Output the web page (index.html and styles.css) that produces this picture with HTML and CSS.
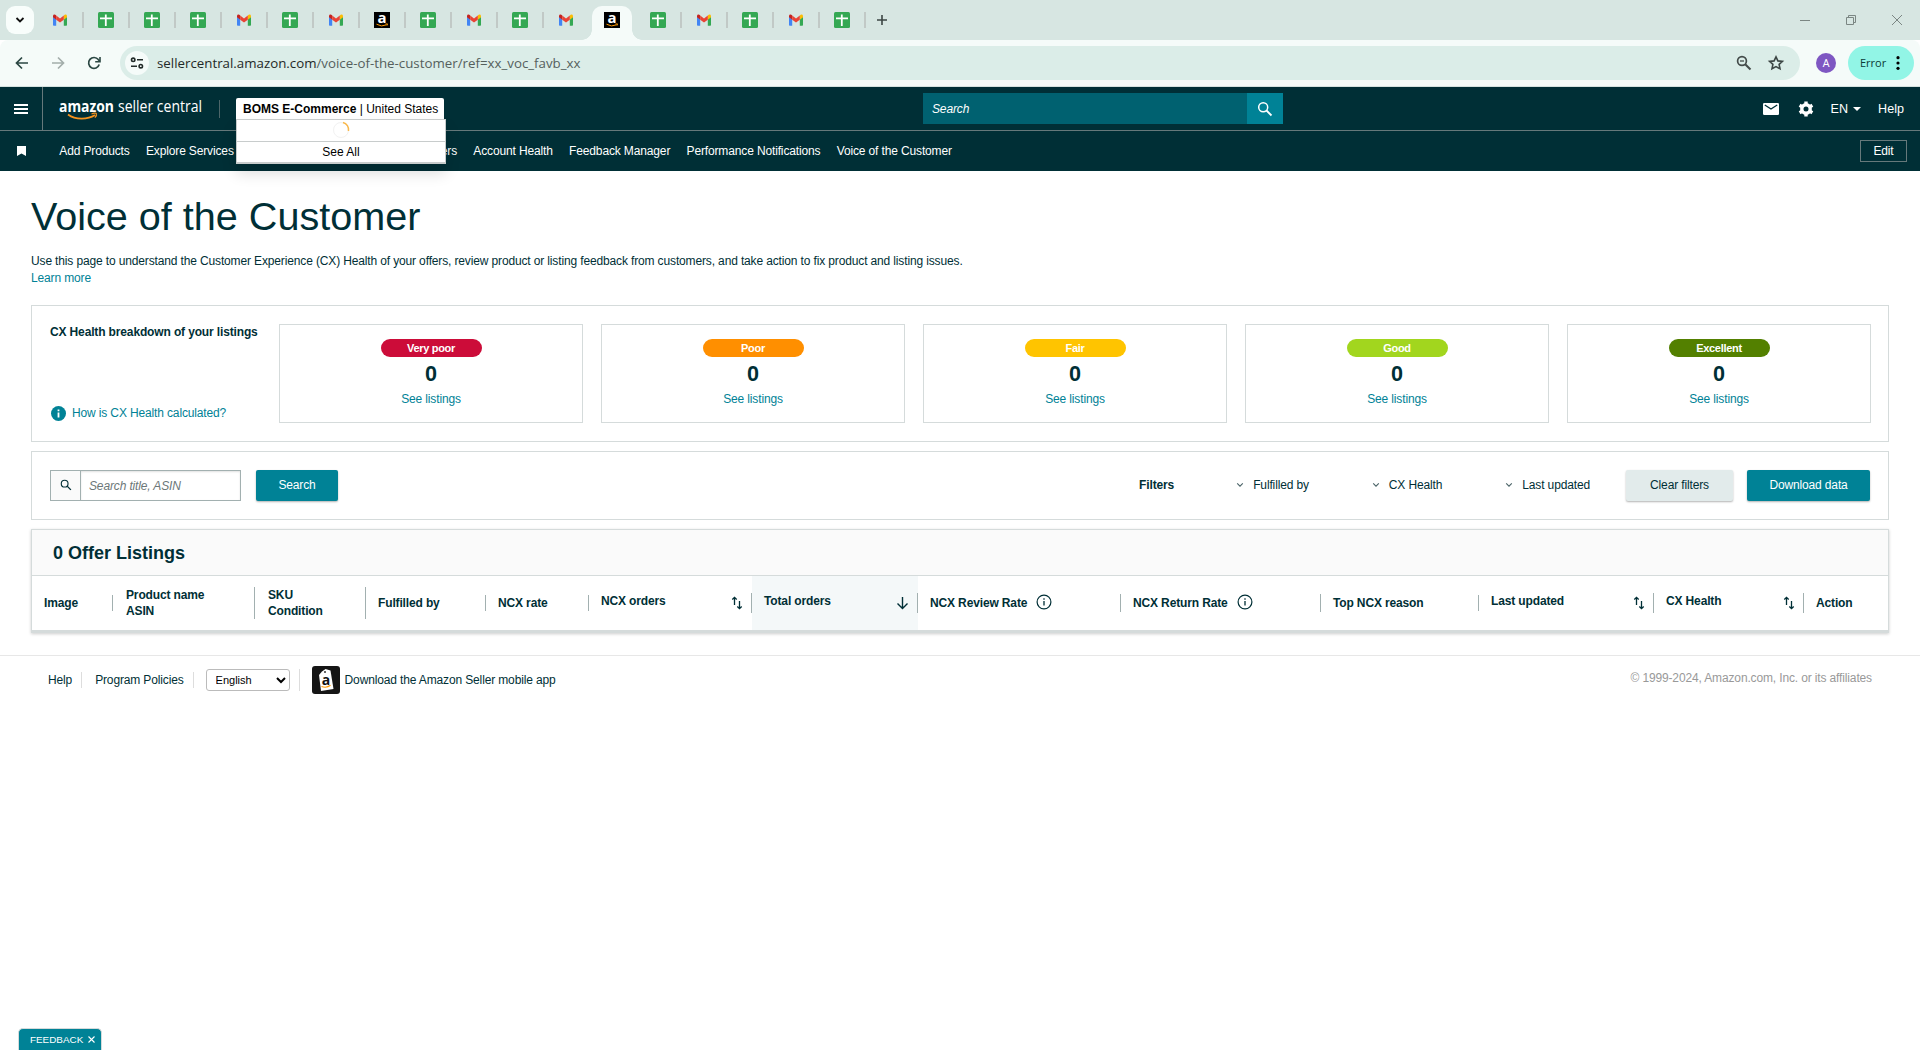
FILE: index.html
```html
<!DOCTYPE html>
<html lang="en">
<head>
  <meta charset="UTF-8">
  <meta name="viewport" content="width=device-width, initial-scale=1.0">
  <title>Voice of the Customer</title>
  <link rel="stylesheet" href="styles.css">
</head>
<body>
  <svg class="defs" width="0" height="0">
    <symbol id="gmail" viewBox="0 0 16 16">
      <path d="M1 4.500V13a.8.8 0 0 0 .8.8h2.400V7.500z" fill="#4285f4"/>
      <path d="M15 4.500V13a.8.8 0 0 1-.8.8h-2.400V7.500z" fill="#34a853"/>
      <path d="M11.800 3.500V7.700L15 5.300V4.200c0-1.600-1.700-2.300-3.200-.7z" fill="#fbbc04"/>
      <path d="M1 5.300 4.200 7.700V3.500C2.700 1.900 1 2.600 1 4.200z" fill="#c5221f"/>
      <path d="M4.200 3.500 8 6.500l3.800-3v4.200L8 10.600 4.200 7.700z" fill="#ea4335"/>
    </symbol>
    <symbol id="sheet" viewBox="0 0 16 16">
      <rect width="16" height="16" rx="1.500" fill="#34a853"/>
      <path d="M2 6.300h12M7.800 2.500v11.500" stroke="#fff" stroke-width="1.800"/>
    </symbol>
    <symbol id="sort" viewBox="0 0 12 14">
      <path d="M3.500 9V1.500M1.300 3.500l2.200-2.200L5.700 3.500M8.500 5v7.500M6.300 10.500l2.200 2.200 2.200-2.200" fill="none" stroke="#002f36" stroke-width="1.300"/>
    </symbol>
    <symbol id="info" viewBox="0 0 16 16">
      <circle cx="8" cy="8" r="6.900" fill="none" stroke="#002f36" stroke-width="1.200"/>
      <path d="M8 7v4.500M8 4.300v1.500" stroke="#002f36" stroke-width="1.300"/>
    </symbol>
    <symbol id="chevron" viewBox="0 0 8 6">
      <path d="m1.200 1.300 2.800 2.800 2.800-2.800" fill="none" stroke="#4a6367" stroke-width="1.100"/>
    </symbol>
    <symbol id="magnifier" viewBox="0 0 16 16">
      <circle cx="6.200" cy="6.200" r="4.500" fill="none" stroke="currentColor" stroke-width="1.500"/>
      <path d="m9.500 9.500 5 5" stroke="currentColor" stroke-width="1.800"/>
    </symbol>
  </svg>

  <!-- Browser -->
  <div class="tabstrip">
    <button class="tab-search"><svg width="10" height="8" viewBox="0 0 10 8"><path d="m1.500 2 3.500 3.500L8.500 2" fill="none" stroke="#111" stroke-width="1.800"/></svg></button>
    <div class="tabs">
      <div class="tab"><svg><use href="#gmail"/></svg></div>
      <div class="tab"><svg><use href="#sheet"/></svg></div>
      <div class="tab"><svg><use href="#sheet"/></svg></div>
      <div class="tab"><svg><use href="#sheet"/></svg></div>
      <div class="tab"><svg><use href="#gmail"/></svg></div>
      <div class="tab"><svg><use href="#sheet"/></svg></div>
      <div class="tab"><svg><use href="#gmail"/></svg></div>
      <div class="tab">
        <svg viewBox="0 0 16 16">
          <rect width="16" height="16"/>
          <text x="8" y="10.700" text-anchor="middle" class="amz-a">a</text>
          <path d="M2.500 12.200q5 3.200 10 .6M11.500 12l2-.1-.5 1.700" stroke="#f90" fill="none"/>
        </svg>
      </div>
      <div class="tab"><svg><use href="#sheet"/></svg></div>
      <div class="tab"><svg><use href="#gmail"/></svg></div>
      <div class="tab"><svg><use href="#sheet"/></svg></div>
      <div class="tab no-line"><svg><use href="#gmail"/></svg></div>
      <div class="tab-active">
        <svg viewBox="0 0 16 16">
          <rect width="16" height="16"/>
          <text x="8" y="10.700" text-anchor="middle" class="amz-a">a</text>
          <path d="M2.500 12.200q5 3.200 10 .6M11.500 12l2-.1-.5 1.700" stroke="#f90" fill="none"/>
        </svg>
      </div>
      <div class="tab"><svg><use href="#sheet"/></svg></div>
      <div class="tab"><svg><use href="#gmail"/></svg></div>
      <div class="tab"><svg><use href="#sheet"/></svg></div>
      <div class="tab"><svg><use href="#gmail"/></svg></div>
      <div class="tab"><svg><use href="#sheet"/></svg></div>
    </div>
    <svg class="new-tab" width="12" height="12" viewBox="0 0 12 12"><path d="M6 1v10M1 6h10" stroke="#3c4644" stroke-width="1.600"/></svg>
    <div class="window-buttons">
      <svg width="12" height="12" viewBox="0 0 12 12"><path d="M1 6.500h10"/></svg>
      <svg width="12" height="12" viewBox="0 0 12 12"><path d="M1.500 3.500h7v7h-7zM3.500 3.500v-2h7v7h-2"/></svg>
      <svg width="12" height="12" viewBox="0 0 12 12"><path d="m1 1 10 10M11 1 1 11"/></svg>
    </div>
  </div>
  <div class="toolbar">
    <div class="nav-buttons">
      <svg width="14" height="14" viewBox="0 0 14 14"><path d="M13 7H2M7 1.500 1.500 7 7 12.500" fill="none" stroke="#2b4743" stroke-width="1.700"/></svg>
      <svg width="14" height="14" viewBox="0 0 14 14"><path d="M1 7h11M7 1.500 12.500 7 7 12.500" fill="none" stroke="#a3aeab" stroke-width="1.700"/></svg>
      <svg width="14" height="14" viewBox="0 0 14 14"><path d="M12.200 8.500A5.400 5.400 0 1 1 11.300 3.600L12.600 5" fill="none" stroke="#2b4743" stroke-width="1.700"/><path d="M13 1v4.800H8.200" fill="none" stroke="#2b4743" stroke-width="1.600"/></svg>
    </div>
    <div class="url-bar">
      <span class="site-info">
        <svg width="14" height="12" viewBox="0 0 14 12"><circle cx="3.200" cy="2.800" r="1.700"/><path d="M7 2.800h6M1 9.200h6"/><circle cx="10.800" cy="9.200" r="1.700"/></svg>
      </span>
      <span class="url">sellercentral.amazon.com<span>/voice-of-the-customer/ref=xx_voc_favb_xx</span></span>
      <svg class="zoom-icon" width="16" height="16" viewBox="0 0 16 16"><circle cx="6" cy="6" r="4.400" fill="none" stroke="#444c4a" stroke-width="1.700"/><path d="m9.200 9.200 5.300 5.300" stroke="#444c4a" stroke-width="2"/><path d="M4 6h4" stroke="#444c4a" stroke-width="1.300"/></svg>
      <svg width="16" height="16" viewBox="0 0 16 16"><path d="m8 1.800 1.900 4.100 4.500.5-3.300 3 .9 4.400L8 11.600l-4 2.200.9-4.400-3.300-3 4.500-.5z" fill="none" stroke="#3c4644" stroke-width="1.600"/></svg>
    </div>
    <span class="avatar">A</span>
    <button class="error-pill">Error
      <svg width="4" height="14" viewBox="0 0 4 14"><circle cx="2" cy="1.700" r="1.600"/><circle cx="2" cy="7" r="1.600"/><circle cx="2" cy="12.300" r="1.600"/></svg>
    </button>
  </div>

  <!-- Seller Central header -->
  <header class="header">
    <div class="hamburger"><span></span><span></span><span></span></div>
    <svg class="logo" width="146" height="26" viewBox="0 0 146 26">
      <text x="0" y="16" textLength="55" lengthAdjust="spacingAndGlyphs" class="logo-bold">amazon</text>
      <text x="59" y="16" textLength="84" lengthAdjust="spacingAndGlyphs" class="logo-light">seller central</text>
      <path d="M9 18.500c8 6 20 5 27 .5" fill="none" stroke="#f7931e" stroke-width="1.700"/>
      <path d="M32.500 18c2-1 4.500-1.200 4.800-.5.400.9-.3 3-1.400 4.200" fill="none" stroke="#f7931e" stroke-width="1.200"/>
    </svg>
    <div class="account">
      <div class="account-current"><b>BOMS E-Commerce</b> | United States</div>
      <div class="account-menu">
        <div class="account-loading"><svg width="18" height="18" viewBox="0 0 18 18"><circle cx="9" cy="9" r="7.500" fill="none" stroke="#f2f2f2"/><path d="M11 1.500A7.500 7.500 0 0 1 16.500 10" fill="none" stroke="#f9b84b" stroke-width="1.500"/></svg></div>
        <div class="account-all">See All</div>
      </div>
    </div>
    <div class="header-search">
      <span>Search</span>
      <button><svg width="16" height="16"><use href="#magnifier"/></svg></button>
    </div>
    <div class="header-links">
      <svg width="16" height="12" viewBox="0 0 16 12"><rect width="16" height="12" rx="1.200" fill="#fff"/><path d="m1.800 2 6.200 4 6.200-4" fill="none" stroke="#002f36" stroke-width="1.300"/></svg>
      <svg class="gear" width="16" height="16" viewBox="0 0 16 16"><circle cx="8" cy="8" r="4.200" fill="none" stroke="#fff" stroke-width="3.400"/><path d="M8 .6v2.900M8 12.500v2.900M1.600 4.300l2.500 1.450M11.900 10.250l2.500 1.450M1.600 11.700l2.500-1.450M11.900 5.750l2.500-1.450" stroke="#fff" stroke-width="3.400"/></svg>
      <span class="lang">EN</span>
      <svg class="caret" width="8" height="4" viewBox="0 0 8 4"><path d="M0 0h8L4 4z" fill="#fff"/></svg>
      <span class="help">Help</span>
    </div>
  </header>
  <nav class="favorites">
    <svg class="bookmark" width="9" height="10" viewBox="0 0 9 10"><path d="M0 0h9v10L4.500 7.500 0 10z" fill="#fff"/></svg>
    <a>Add Products</a>
    <a>Explore Services</a>
    <a class="orders">Manage Orders</a>
    <a>Account Health</a>
    <a>Feedback Manager</a>
    <a>Performance Notifications</a>
    <a>Voice of the Customer</a>
    <button class="edit">Edit</button>
  </nav>

  <main>
    <h1>Voice of the Customer</h1>
    <p class="intro">Use this page to understand the Customer Experience (CX) Health of your offers, review product or listing feedback from customers, and take action to fix product and listing issues.<br><a>Learn more</a></p>

    <section class="health">
      <div class="health-title">
        <b>CX Health breakdown of your listings</b>
        <a><svg width="15" height="15" viewBox="0 0 15 15"><circle cx="7.500" cy="7.500" r="7.500" fill="#008296"/><path d="M7.500 6.500v5M7.500 3.500v1.800" stroke="#fff" stroke-width="1.800"/></svg>How is CX Health calculated?</a>
      </div>
      <div class="health-card"><span class="pill very-poor">Very poor</span><strong>0</strong><a>See listings</a></div>
      <div class="health-card"><span class="pill poor">Poor</span><strong>0</strong><a>See listings</a></div>
      <div class="health-card"><span class="pill fair">Fair</span><strong>0</strong><a>See listings</a></div>
      <div class="health-card"><span class="pill good">Good</span><strong>0</strong><a>See listings</a></div>
      <div class="health-card"><span class="pill excellent">Excellent</span><strong>0</strong><a>See listings</a></div>
    </section>

    <section class="filters">
      <div class="search-box">
        <span class="search-icon"><svg width="12" height="12"><use href="#magnifier"/></svg></span>
        <input type="text" placeholder="Search title, ASIN">
      </div>
      <button class="btn btn-search">Search</button>
      <b class="filters-label">Filters</b>
      <div class="filter fulfilled"><svg width="8" height="6"><use href="#chevron"/></svg>Fulfilled by</div>
      <div class="filter cx"><svg width="8" height="6"><use href="#chevron"/></svg>CX Health</div>
      <div class="filter updated"><svg width="8" height="6"><use href="#chevron"/></svg>Last updated</div>
      <button class="btn btn-clear">Clear filters</button>
      <button class="btn btn-download">Download data</button>
    </section>

    <section class="listings">
      <h2>0 Offer Listings</h2>
      <div class="columns">
        <div class="col"><div>Image</div></div>
        <div class="col two-line"><div>Product name<br>ASIN</div></div>
        <div class="col two-line"><div>SKU<br>Condition</div></div>
        <div class="col"><div>Fulfilled by</div></div>
        <div class="col"><div>NCX rate</div></div>
        <div class="col sortable"><div><span>NCX orders</span><svg width="12" height="14"><use href="#sort"/></svg></div></div>
        <div class="col sortable sorted"><div><span>Total orders</span><svg width="13" height="14" viewBox="0 0 13 14"><path d="M6.500 1v11.500M1.500 7.500l5 5 5-5" fill="none" stroke="#002f36" stroke-width="1.400"/></svg></div></div>
        <div class="col with-info"><div>NCX Review Rate<svg width="16" height="16"><use href="#info"/></svg></div></div>
        <div class="col with-info"><div>NCX Return Rate<svg width="16" height="16"><use href="#info"/></svg></div></div>
        <div class="col"><div>Top NCX reason</div></div>
        <div class="col sortable"><div><span>Last updated</span><svg width="12" height="14"><use href="#sort"/></svg></div></div>
        <div class="col sortable"><div><span>CX Health</span><svg width="12" height="14"><use href="#sort"/></svg></div></div>
        <div class="col last"><div>Action</div></div>
      </div>
    </section>
  </main>

  <footer>
    <a class="foot-help">Help</a>
    <a class="foot-policies">Program Policies</a>
    <div class="foot-lang"><select><option>English</option></select></div>
    <svg class="app-icon" width="28" height="28" viewBox="0 0 28 28">
      <rect width="28" height="28" rx="3" fill="#151515"/>
      <path d="M10 5.500 13.500 3l5 1.500 3 18.500-12.500 2L7 9z" fill="#fff"/>
      <circle cx="13" cy="6" r="1" fill="#333"/>
      <text x="14" y="18.500" text-anchor="middle" class="app-a">a</text>
      <path d="M9.500 20.500q5 2 9-1.200" stroke="#f90" stroke-width="1.200" fill="none"/>
    </svg>
    <a>Download the Amazon Seller mobile app</a>
    <span class="copyright">© 1999-2024, Amazon.com, Inc. or its affiliates</span>
  </footer>

  <div class="feedback">FEEDBACK <svg width="7" height="7" viewBox="0 0 7 7"><path d="m.5.5 6 6M6.500.5l-6 6" stroke="#fff" stroke-width="1.100"/></svg></div>
</body>
</html>
```
FILE: styles.css
```css
* {
  box-sizing: border-box;
}

body {
  margin: 0;
  height: 1050px;
  overflow: hidden;
  font-family: "Liberation Sans", Arial, sans-serif;
  font-size: 12px;
  letter-spacing: -0.14px;
  line-height: 16px;
  color: #002f36;
  background: #fff;
}

button {
  font-family: inherit;
  font-size: inherit;
  letter-spacing: inherit;
  border: none;
  padding: 0;
}

svg {
  display: block;
  flex: none;
  overflow: visible;
}

.defs {
  position: absolute;
}

/* Browser tabs */
.tabstrip {
  display: flex;
  align-items: center;
  height: 40px;
  padding-left: 6px;
  background: #d7e6e2;
}

.tab-search {
  display: flex;
  align-items: center;
  justify-content: center;
  width: 28px;
  height: 28px;
  border-radius: 9px;
  background: #f8fdfb;
}

.tabs {
  display: flex;
  height: 40px;
  margin-left: 4px;
}

.tab {
  display: flex;
  align-items: center;
  gap: 14px;
  width: 46px;
  padding-left: 14px;
}

.tab::after {
  content: "";
  width: 2px;
  height: 16px;
  background: #c1c9c6;
}

.tab.no-line::after {
  background: none;
}

.tab svg,
.tab-active svg {
  width: 16px;
  height: 16px;
}

.tab-active {
  position: relative;
  display: flex;
  align-items: center;
  justify-content: center;
  width: 40px;
  height: 34px;
  margin: 6px 4px 0 2px;
  padding-bottom: 6px;
  border-radius: 10px 10px 0 0;
  background: #f5fbf9;
}

.tab-active::before,
.tab-active::after {
  content: "";
  position: absolute;
  bottom: 0;
  width: 10px;
  height: 10px;
}

.tab-active::before {
  left: -10px;
  background: radial-gradient(circle at 0 0, transparent 9.5px, #f5fbf9 10px);
}

.tab-active::after {
  right: -10px;
  background: radial-gradient(circle at 100% 0, transparent 9.5px, #f5fbf9 10px);
}

.amz-a {
  font: bold 15px "Open Sans", sans-serif;
  fill: #fff;
}

.new-tab {
  margin-left: 10px;
}

.window-buttons {
  display: flex;
  gap: 34px;
  margin-left: auto;
  padding-right: 17px;
}

.window-buttons path {
  fill: none;
  stroke: #7b8683;
}

/* Browser toolbar */
.toolbar {
  display: flex;
  align-items: center;
  height: 47px;
  padding: 0 6px 1px 15px;
  background: #f5fbf9;
  border-bottom: 1px solid #d5e2df;
  border-radius: 8px 8px 0 0;
  letter-spacing: 0;
}

.nav-buttons {
  display: flex;
  gap: 22px;
}

.url-bar {
  display: flex;
  align-items: center;
  width: 1680px;
  height: 34px;
  margin-left: 19px;
  padding: 0 16px 0 5px;
  border-radius: 17px;
  background: #dbede8;
}

.site-info {
  display: flex;
  align-items: center;
  justify-content: center;
  width: 24px;
  height: 24px;
  border-radius: 12px;
  background: #f5fbf9;
}

.site-info svg {
  fill: none;
  stroke: #222b29;
  stroke-width: 1.6;
}

.url {
  margin-left: 8px;
  font-family: "Open Sans", "Noto Sans", sans-serif;
  font-size: 13.3px;
  color: #1f2927;
}

.url span {
  color: #55605d;
}

.zoom-icon {
  margin-left: auto;
  margin-right: 16px;
}

.avatar {
  width: 20px;
  height: 20px;
  margin-left: 16px;
  border-radius: 10px;
  background: #7e57c2;
  color: #fff;
  font-family: Roboto, sans-serif;
  font-size: 11px;
  line-height: 21px;
  text-align: center;
}

.error-pill {
  display: flex;
  align-items: center;
  justify-content: space-between;
  width: 66px;
  height: 34px;
  margin-left: 12px;
  padding: 0 14px 0 12px;
  border-radius: 17px;
  background: #92f5e6;
  color: #0b3b36;
  font-family: "Open Sans", sans-serif;
  font-size: 11px;
}

/* Header */
.header {
  display: flex;
  align-items: center;
  height: 44px;
  background: #002f36;
  border-bottom: 1px solid #66797b;
  color: #fff;
}

.hamburger {
  display: flex;
  flex-direction: column;
  justify-content: center;
  gap: 2px;
  width: 43px;
  height: 43px;
  padding-left: 14px;
  border-right: 1px solid #66797b;
}

.hamburger span {
  width: 14px;
  height: 2px;
  background: #fff;
}

.logo {
  margin-left: 16px;
  letter-spacing: 0;
}

.logo-bold {
  font: bold 16.5px "Open Sans", sans-serif;
  fill: #fff;
}

.logo-light {
  font: 16.5px "Open Sans", sans-serif;
  fill: #fff;
}

.account {
  position: relative;
  width: 227px;
  margin-left: 14px;
  padding-left: 17px;
  border-left: 1px solid #4d6669;
  height: 18px;
}

.account-current {
  width: 208px;
  height: 21px;
  margin-top: -2px;
  margin-left: -1px;
  padding-left: 7px;
  border-radius: 2px 2px 0 0;
  background: #fff;
  color: #000;
  letter-spacing: 0;
  line-height: 22px;
  white-space: nowrap;
}

.account-menu {
  position: absolute;
  top: 19px;
  left: 16px;
  z-index: 10;
  width: 210px;
  height: 45px;
  border: 1px solid #c8cccc;
  border-bottom-width: 2px;
  background: #fff;
  color: #000;
  text-align: center;
  box-shadow: 0 9px 14px rgba(0, 0, 0, 0.14);
}

.account-loading {
  display: flex;
  justify-content: center;
  align-items: center;
  height: 22px;
  border-bottom: 1px solid #c8cccc;
}

.account-all {
  letter-spacing: 0;
  line-height: 20px;
}

.header-search {
  display: flex;
  align-items: center;
  width: 360px;
  height: 31px;
  margin-left: 477px;
  background: #006170;
  font-style: italic;
}

.header-search span {
  flex: 1;
  padding-left: 9px;
}

.header-search button {
  display: flex;
  align-items: center;
  justify-content: center;
  width: 36px;
  height: 31px;
  background: #008296;
  color: #fff;
}

.header-links {
  display: flex;
  align-items: center;
  margin-left: auto;
  padding-right: 16px;
  font-size: 12.6px;
  letter-spacing: 0;
}

.gear {
  margin-left: 19px;
}

.lang {
  margin-left: 17px;
}

.caret {
  margin-left: 5px;
}

.help {
  margin-left: 17px;
}

.favorites {
  display: flex;
  align-items: center;
  gap: 16.3px;
  height: 40px;
  padding-right: 13px;
  background: #002f36;
  color: #fff;
  white-space: nowrap;
}

.bookmark {
  margin: 0 17px 0 17px;
}

.favorites .orders {
  width: 207px;
  text-align: right;
}

.edit {
  width: 47px;
  height: 22px;
  margin-left: auto;
  border: 1px solid #66797b;
  background: none;
  color: #fff;
}

/* Page */
main {
  padding: 0 31px;
}

main a {
  color: #008296;
}

h1 {
  margin: 20px 0 0;
  font-size: 39.6px;
  font-weight: 400;
  letter-spacing: 0;
  line-height: 50px;
}

.intro {
  margin: 12px 0 0;
  line-height: 17px;
}

.health {
  display: grid;
  grid-template-columns: 211px repeat(5, 1fr);
  gap: 18px;
  height: 137px;
  margin-top: 18px;
  padding: 18px 17px 18px 18px;
  border: 1px solid #d5dbdb;
}

.health-title {
  display: flex;
  flex-direction: column;
  justify-content: space-between;
  height: 97px;
  white-space: nowrap;
}

.health-title a {
  display: flex;
  align-items: center;
  gap: 6px;
  padding-left: 1px;
}

.health-card {
  display: flex;
  flex-direction: column;
  align-items: center;
  height: 99px;
  padding-top: 14px;
  border: 1px solid #d5dbdb;
}

.pill {
  width: 101px;
  height: 18px;
  border-radius: 9px;
  color: #fff;
  font-size: 11px;
  font-weight: bold;
  letter-spacing: -0.3px;
  line-height: 18px;
  text-align: center;
}

.very-poor {
  background: #cc0c39;
}

.poor {
  background: #ff8f00;
}

.fair {
  background: #ffc400;
}

.good {
  background: #a2d61e;
}

.excellent {
  background: #538000;
}

.health-card strong {
  margin-top: 4px;
  font-size: 21.6px;
  line-height: 26px;
}

.health-card a {
  margin-top: 4px;
}

/* Search and filters */
.filters {
  display: flex;
  align-items: center;
  height: 69px;
  margin-top: 9px;
  padding: 0 18px;
  border: 1px solid #d5dbdb;
}

.search-box {
  display: flex;
  width: 191px;
  height: 31px;
  border: 1px solid #a2b0b0;
}

.search-icon {
  display: flex;
  align-items: center;
  justify-content: center;
  width: 30px;
  padding-bottom: 2px;
  border-right: 1px solid #a2b0b0;
  background: #fafafa;
}

.search-box input {
  flex: 1;
  width: 100px;
  padding: 0 8px;
  border: none;
  font: italic 12px "Liberation Sans", Arial, sans-serif;
  letter-spacing: -0.14px;
  box-shadow: inset 0 1px 2px rgba(0, 0, 0, 0.12);
}

.search-box input::placeholder {
  color: #6c7778;
}

.btn {
  height: 31px;
  padding-bottom: 1px;
  border-radius: 2px;
  background: #008296;
  color: #fff;
  box-shadow: 0 1px 2px rgba(0, 0, 0, 0.3);
}

.btn-search {
  width: 82px;
  margin-left: 15px;
}

.filters-label {
  margin-left: auto;
  padding-bottom: 1px;
}

.filter {
  display: flex;
  align-items: center;
  gap: 9px;
  padding-bottom: 1px;
}

.fulfilled {
  margin-left: 62px;
}

.cx {
  margin-left: 63px;
}

.updated {
  margin-left: 63px;
}

.btn-clear {
  width: 107px;
  margin-left: 36px;
  background: #e2ebeb;
  color: #002f36;
}

.btn-download {
  width: 123px;
  margin-left: 14px;
}

/* Listings table */
.listings {
  margin-top: 9px;
  border: 1px solid #d5dbdb;
  border-bottom-width: 3px;
  box-shadow: 0 1px 3px rgba(0, 0, 0, 0.2);
}

h2 {
  height: 46px;
  margin: 0;
  padding-left: 21px;
  border-bottom: 1px solid #d5dbdb;
  background: #fafafa;
  font-size: 18px;
  letter-spacing: 0;
  line-height: 46px;
}

.columns {
  display: grid;
  grid-template-columns: 81px 142px 111px 120px 103px 163px 166px 203px 200px 158px 175px 150px 1fr;
  height: 54px;
  font-weight: bold;
}

.col {
  display: flex;
  align-items: center;
  padding-left: 12px;
}

.col.two-line {
  padding-left: 13px;
}

.col > div {
  flex: 1;
  border-right: 1px solid #a2b0b0;
}

.col.sortable > div {
  display: flex;
  align-items: center;
  justify-content: space-between;
  height: 20px;
  padding-right: 8px;
}

.sortable span {
  padding-bottom: 4px;
}

.col.sorted {
  background: #f4f8f9;
}

.col.with-info > div {
  display: flex;
  gap: 9px;
  line-height: 18px;
  height: 18px;
}

.col.last > div {
  border-right: none;
}

/* Footer */
footer {
  display: flex;
  align-items: center;
  height: 49px;
  margin-top: 22px;
  padding: 0 48px;
  border-top: 1px solid #e7e7e7;
}

.foot-help {
  padding-right: 9px;
  border-right: 1px solid #ddd;
}

.foot-policies {
  padding: 0 9px 0 13px;
  border-right: 1px solid #ddd;
}

.foot-lang {
  padding: 0 9px 0 12px;
  border-right: 1px solid #ddd;
}

.foot-lang select {
  display: block;
  width: 84px;
  height: 22px;
  padding: 0 0 0 5px;
  border: 1px solid #bbb;
  border-radius: 3px;
  background: #fff;
  color: #000;
  font: 11px "Liberation Sans", Arial, sans-serif;
}

.app-icon {
  margin: 0 5px 0 12px;
}

.app-a {
  font: bold 14px "Open Sans", sans-serif;
  fill: #111;
}

.copyright {
  margin-left: auto;
  padding-bottom: 4px;
  color: #999;
}

.feedback {
  position: fixed;
  left: 18px;
  bottom: 0;
  display: flex;
  align-items: center;
  gap: 5px;
  width: 84px;
  height: 22px;
  padding-left: 11px;
  border: 1px solid #d5dbdb;
  border-bottom: none;
  border-radius: 5px 5px 0 0;
  background: #008296;
  color: #fff;
  font-size: 9.9px;
  letter-spacing: 0;
}
```
